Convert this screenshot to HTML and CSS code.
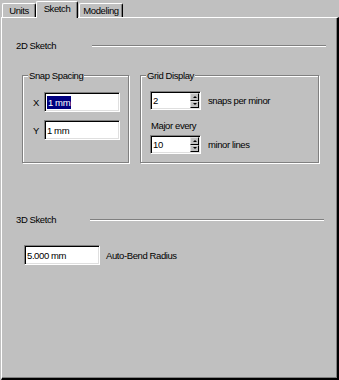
FILE: index.html
```html
<!DOCTYPE html>
<html>
<head>
<meta charset="utf-8">
<link rel="stylesheet" href="styles.css">
</head>
<body>
<div class="window">
  <div class="tabs">
    <div class="tab tab-units">Units</div>
    <div class="tab tab-sketch active">Sketch</div>
    <div class="tab tab-modeling">Modeling</div>
  </div>
  <div class="panel">
    <div class="section-head head-2d">
      <span class="section-title">2D Sketch</span>
      <span class="rule"></span>
    </div>
    <div class="groups">
      <fieldset class="group group-snap">
        <legend>Snap Spacing</legend>
        <div class="field-row first">
          <span class="axis">X</span>
          <span class="edit"><span class="sel">1 mm</span></span>
        </div>
        <div class="field-row second">
          <span class="axis">Y</span>
          <span class="edit">1 mm</span>
        </div>
      </fieldset>
      <fieldset class="group group-grid">
        <legend>Grid Display</legend>
        <div class="spin-row first">
          <span class="spin">
            <span class="spin-text">2</span>
            <span class="spin-btns">
              <span class="spin-btn"><span class="arrow-up"></span></span>
              <span class="spin-btn"><span class="arrow-down"></span></span>
            </span>
          </span>
          <span class="spin-label">snaps per minor</span>
        </div>
        <div class="caption">Major every</div>
        <div class="spin-row second">
          <span class="spin">
            <span class="spin-text">10</span>
            <span class="spin-btns">
              <span class="spin-btn"><span class="arrow-up"></span></span>
              <span class="spin-btn"><span class="arrow-down"></span></span>
            </span>
          </span>
          <span class="spin-label">minor lines</span>
        </div>
      </fieldset>
    </div>
    <div class="section-head head-3d">
      <span class="section-title">3D Sketch</span>
      <span class="rule"></span>
    </div>
    <div class="bend-row">
      <span class="edit edit-bend">5.000 mm</span>
      <span class="bend-label">Auto-Bend Radius</span>
    </div>
  </div>
</div>
</body>
</html>
```

FILE: styles.css
```css
* { box-sizing: border-box; }

html, body {
  margin: 0;
  padding: 0;
  background: #c0c0c0;
}

body {
  width: 339px;
  height: 380px;
  overflow: hidden;
  padding-left: 1px;
  font-family: "Liberation Sans", Arial, sans-serif;
  font-size: 9.5px;
  letter-spacing: -0.4px;
  color: #000;
}

.window {
  width: 338px;
  height: 380px;
  display: flex;
  flex-direction: column;
}

/* ---------- tabs ---------- */
.tabs {
  height: 17px;
  display: flex;
  align-items: flex-end;
  flex: none;
}

.tab {
  height: 14px;
  border-left: 1px solid #fff;
  border-top: 1px solid #fff;
  border-right: 1px solid #000;
  border-top-left-radius: 2px;
  border-top-right-radius: 2px;
  box-shadow: inset -1px 0 0 #808080;
  background: #c0c0c0;
  text-align: center;
  line-height: 12px;
  padding-top: 1px;
}

.tab-units { width: 34px; margin-left: 1px; }
.tab-sketch { width: 42px; margin-left: 0; }
.tab-modeling { width: 44px; margin-left: 1px; }

.tab.active {
  height: 17px;
  margin-bottom: -1px;
  position: relative;
  z-index: 1;
  line-height: 12px;
  padding-top: 1px;
}

/* ---------- panel ---------- */
.panel {
  flex: none;
  height: 363px;
  border-top: 1px solid #fff;
  border-left: 1px solid #fff;
  border-right: 2px solid #000;
  border-bottom: 2px solid #000;
  box-shadow: inset -1px -1px 0 #808080;
  display: flex;
  flex-direction: column;
}

.section-head {
  display: flex;
  align-items: center;
  height: 11px;
  line-height: 11px;
}

.head-2d { margin: 22px 11px 0 14px; }
.head-3d { margin: 51px 13px 0 14px; }

.head-2d .section-title { width: 76px; }
.head-3d .section-title { width: 74px; }

.section-title { flex: none; }

.rule {
  flex: 1;
  height: 2px;
  border-top: 1px solid #808080;
  border-bottom: 1px solid #fff;
}

/* ---------- group boxes ---------- */
.groups {
  display: flex;
  margin: 19px 0 0 20px;
}

.group {
  margin: 0;
  padding: 0;
  border: 1px solid #808080;
  box-shadow: inset 1px 1px 0 #fff, 1px 1px 0 #fff;
  min-width: 0;
}

.group legend {
  margin-left: 5px;
  padding: 0 1px;
  line-height: 11px;
  background: #c0c0c0;
}

.group-snap { width: 107px; }
.group-grid { width: 179px; margin-left: 11px; padding-bottom: 8px; }

.field-row {
  display: flex;
  align-items: center;
  padding-left: 9px;
}
.field-row.first { margin-top: 11px; }
.field-row.second { margin-top: 8px; }

.axis {
  width: 12px;
  padding-left: 1px;
}

/* sunken edit box */
.edit {
  width: 76px;
  height: 20px;
  background: #fff;
  border: 1px solid;
  border-color: #808080 #fff #fff #808080;
  box-shadow: inset 1px 1px 0 #000, inset -1px -1px 0 #dfdfdf;
  display: flex;
  align-items: center;
  padding-left: 2px;
  line-height: 13px;
}

.sel {
  background: #000080;
  color: #fff;
  padding: 0 1px;
}

/* spinners */
.spin-row {
  display: flex;
  align-items: center;
  padding-left: 9px;
}
.spin-row.first { margin-top: 10px; }
.spin-row.second { margin-top: 4px; }

.spin {
  width: 51px;
  height: 19px;
  background: #fff;
  border: 1px solid;
  border-color: #808080 #fff #fff #808080;
  box-shadow: inset 1px 1px 0 #000, inset -1px -1px 0 #dfdfdf;
  display: flex;
  padding: 1px 1px 1px 1px;
}

.spin-text {
  flex: 1;
  padding-left: 1px;
  line-height: 15px;
}

.spin-btns {
  width: 9px;
  display: flex;
  flex-direction: column;
}

.spin-btn {
  flex: 1;
  background: #c0c0c0;
  border: 1px solid;
  border-color: #dfdfdf #000 #000 #dfdfdf;
  display: flex;
  align-items: center;
  justify-content: center;
}

.arrow-up {
  width: 0;
  height: 0;
  border-left: 2px solid transparent;
  border-right: 2px solid transparent;
  border-bottom: 2px solid #000;
}

.arrow-down {
  width: 0;
  height: 0;
  border-left: 2px solid transparent;
  border-right: 2px solid transparent;
  border-top: 2px solid #000;
}

.spin-label { margin-left: 7px; }

.caption {
  margin-top: 10px;
  padding-left: 10px;
  line-height: 11px;
}

/* bend radius */
.bend-row {
  display: flex;
  align-items: center;
  margin: 20px 0 0 22px;
}

.edit-bend { width: 76px; height: 20px; }

.bend-label { margin-left: 6px; }
```
